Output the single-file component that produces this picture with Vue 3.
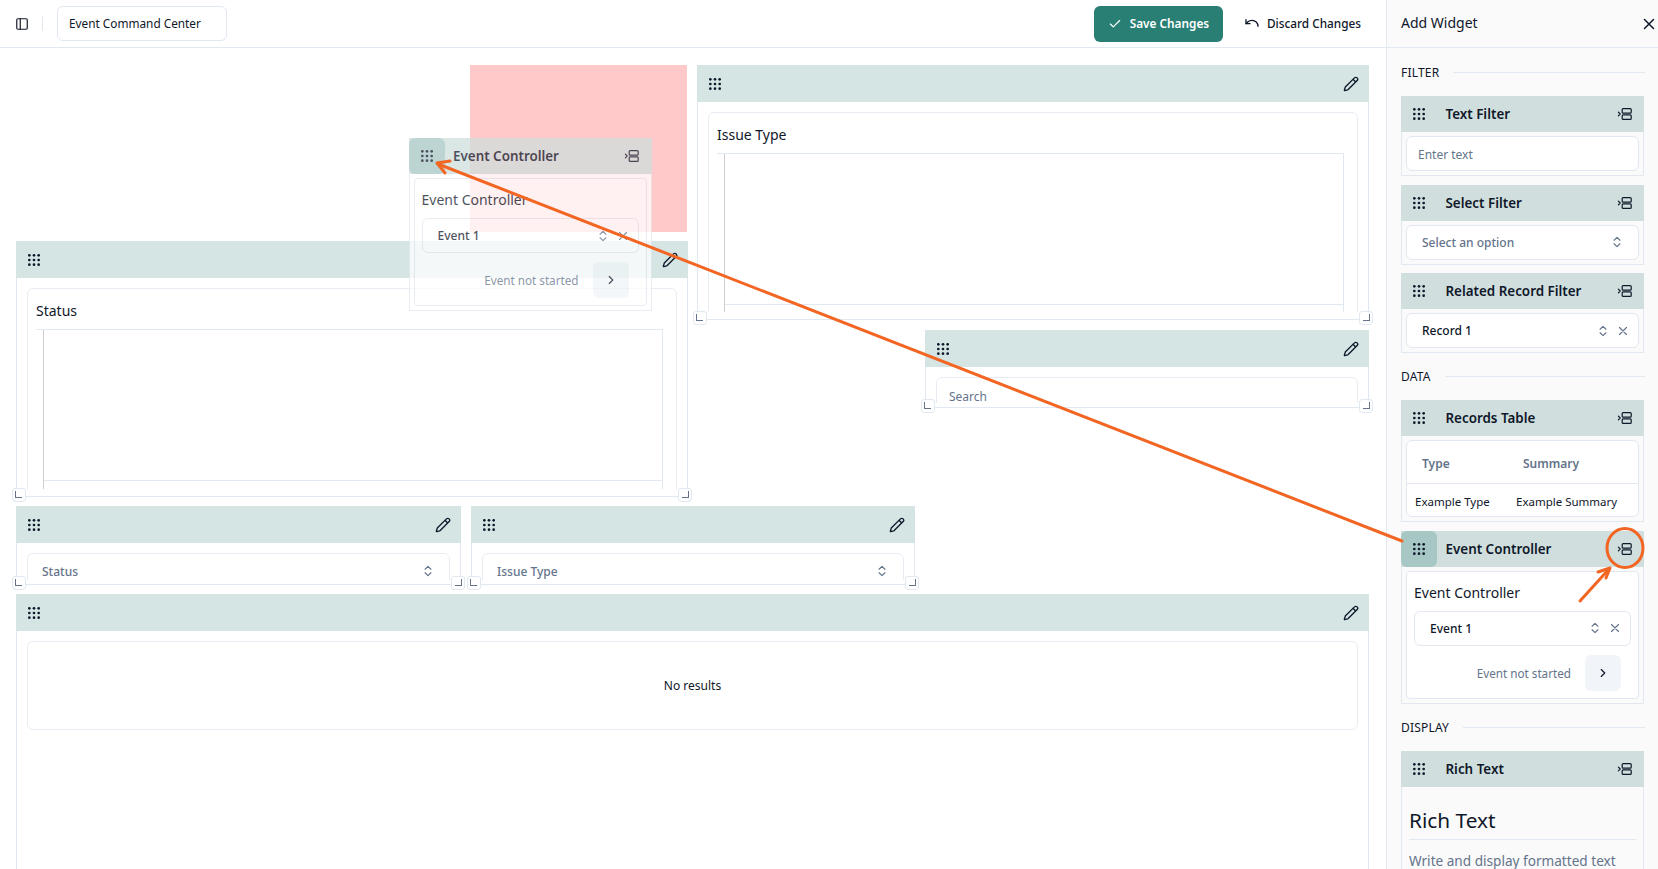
<script setup>
const widgets = [
  { id: 'issue', kind: 'chart', title: 'Issue Type', l: 697, t: 65, w: 672, h: 255, handles: true },
  { id: 'status', kind: 'chart', title: 'Status', l: 16, t: 241, w: 672, h: 256, handles: true },
  { id: 'search', kind: 'input', title: 'Search', l: 925, t: 330, w: 444, h: 78, handles: true },
  { id: 'sel1', kind: 'select', title: 'Status', l: 16, t: 506, w: 445, h: 79, handles: true },
  { id: 'sel2', kind: 'select', title: 'Issue Type', l: 471, t: 506, w: 444, h: 79, handles: true },
  { id: 'table', kind: 'table', title: 'No results', l: 16, t: 594, w: 1353, h: 400, handles: false }
]
const place = (w) => ({ left: w.l + 'px', top: w.t - 48 + 'px', width: w.w + 'px', height: w.h + 'px' })
</script>

<template>
  <div class="app">
    <svg class="defs" width="0" height="0" aria-hidden="true">
      <symbol id="i-grip" viewBox="0 0 24 24">
        <g fill="currentColor">
          <circle cx="5" cy="5" r="2"/><circle cx="12" cy="5" r="2"/><circle cx="19" cy="5" r="2"/>
          <circle cx="5" cy="12" r="2"/><circle cx="12" cy="12" r="2"/><circle cx="19" cy="12" r="2"/>
          <circle cx="5" cy="19" r="2"/><circle cx="12" cy="19" r="2"/><circle cx="19" cy="19" r="2"/>
        </g>
      </symbol>
      <symbol id="i-pencil" viewBox="0 0 24 24">
        <path fill="none" stroke="currentColor" stroke-width="2" stroke-linecap="round" stroke-linejoin="round" d="M21.2 6.8a2.8 2.8 0 0 0-4-4L3.8 16.2a2 2 0 0 0-.5.8l-1.3 4.4a.5.5 0 0 0 .6.6l4.4-1.3a2 2 0 0 0 .8-.5zM15 5l4 4"/>
      </symbol>
      <symbol id="i-add" viewBox="0 0 16 16">
        <g fill="none" stroke="currentColor" stroke-width="1.2" stroke-linecap="round" stroke-linejoin="round">
          <rect x="5.2" y="2.6" width="9" height="4.6" rx="1"/>
          <rect x="5.2" y="8.8" width="9" height="4.6" rx="1"/>
          <path d="m1.4 6.2 1.8 1.8-1.8 1.8"/>
        </g>
      </symbol>
      <symbol id="i-updown" viewBox="0 0 24 24">
        <path fill="none" stroke="currentColor" stroke-width="2" stroke-linecap="round" stroke-linejoin="round" d="m7 15 5 5 5-5M7 9l5-5 5 5"/>
      </symbol>
      <symbol id="i-x" viewBox="0 0 24 24">
        <path fill="none" stroke="currentColor" stroke-width="2" stroke-linecap="round" stroke-linejoin="round" d="M18 6 6 18M6 6l12 12"/>
      </symbol>
      <symbol id="i-right" viewBox="0 0 24 24">
        <path fill="none" stroke="currentColor" stroke-width="2" stroke-linecap="round" stroke-linejoin="round" d="m9 18 6-6-6-6"/>
      </symbol>
    </svg>

    <div class="main">
      <header class="topbar">
        <svg class="panel-icon" viewBox="0 0 24 24" fill="none" stroke="currentColor" stroke-width="2" stroke-linecap="round" stroke-linejoin="round">
          <rect x="3" y="3" width="18" height="18" rx="2"/><path d="M9 3v18"/>
        </svg>
        <span class="vsep"></span>
        <div class="name-input">Event Command Center</div>
        <div class="spacer"></div>
        <button class="btn-save">
          <svg class="btn-ic" viewBox="0 0 24 24" fill="none" stroke="currentColor" stroke-width="2" stroke-linecap="round" stroke-linejoin="round"><path d="M20 6 9 17l-5-5"/></svg>
          <span class="btn-label">Save Changes</span>
        </button>
        <button class="btn-discard">
          <svg class="undo-ic" viewBox="0 0 24 24" fill="none" stroke="currentColor" stroke-width="2" stroke-linecap="round" stroke-linejoin="round"><path d="M3 7v6h6"/><path d="M21 17a9 9 0 0 0-9-9 9 9 0 0 0-6 2.3L3 13"/></svg>
          <span class="btn-label">Discard Changes</span>
        </button>
      </header>

      <main class="canvas">
        <div class="drop-zone"></div>

        <section v-for="w in widgets" :key="w.id" class="widget" :style="place(w)">
          <div class="w-head">
            <span class="grip"><svg class="ic16"><use href="#i-grip"/></svg></span>
            <span class="pencil"><svg class="ic16"><use href="#i-pencil"/></svg></span>
          </div>
          <div class="w-clip" :class="{ short: w.kind === 'input' || w.kind === 'select' }">
            <div v-if="w.kind === 'chart'" class="w-card chart-card">
              <div class="chart-title">{{ w.title }}</div>
              <div class="chart-top">
                <div class="plot"><div class="plot-area"></div></div>
              </div>
            </div>
            <div v-else-if="w.kind === 'input'" class="w-card field"><span class="field-ph">{{ w.title }}</span></div>
            <div v-else-if="w.kind === 'select'" class="w-card field sel">
              <span class="field-val">{{ w.title }}</span>
              <svg class="ic14 muted"><use href="#i-updown"/></svg>
            </div>
            <div v-else class="w-card empty">{{ w.title }}</div>
          </div>
          <template v-if="w.handles">
            <span class="handle hl"></span>
            <span class="handle hr"></span>
          </template>
        </section>
      </main>
    </div>

    <aside class="sidebar">
      <div class="side-head">
        <span class="side-title">Add Widget</span>
        <svg class="side-close"><use href="#i-x"/></svg>
      </div>
      <div class="side-body">
        <div class="sec first"><span>FILTER</span><i></i></div>

        <div class="card">
          <div class="card-head"><span class="card-grip"><svg class="ic16"><use href="#i-grip"/></svg></span><b>Text Filter</b><svg class="ic16 add"><use href="#i-add"/></svg></div>
          <div class="card-body"><div class="ctl ph-text">Enter text</div></div>
        </div>
        <div class="card">
          <div class="card-head"><span class="card-grip"><svg class="ic16"><use href="#i-grip"/></svg></span><b>Select Filter</b><svg class="ic16 add"><use href="#i-add"/></svg></div>
          <div class="card-body"><div class="ctl sel-text"><span>Select an option</span><svg class="ic14 muted"><use href="#i-updown"/></svg></div></div>
        </div>
        <div class="card">
          <div class="card-head"><span class="card-grip"><svg class="ic16"><use href="#i-grip"/></svg></span><b>Related Record Filter</b><svg class="ic16 add"><use href="#i-add"/></svg></div>
          <div class="card-body"><div class="ctl val-text"><span>Record 1</span><svg class="ic14 muted"><use href="#i-updown"/></svg><svg class="ic14 muted x"><use href="#i-x"/></svg></div></div>
        </div>

        <div class="sec mid"><span>DATA</span><i></i></div>

        <div class="card">
          <div class="card-head"><span class="card-grip"><svg class="ic16"><use href="#i-grip"/></svg></span><b>Records Table</b><svg class="ic16 add"><use href="#i-add"/></svg></div>
          <div class="card-body">
            <div class="mini-table">
              <div class="mt-row mt-head"><span>Type</span><span>Summary</span></div>
              <div class="mt-row mt-cells"><span>Example Type</span><span>Example Summary</span></div>
            </div>
          </div>
        </div>

        <div class="card">
          <div class="card-head"><span class="card-grip active"><svg class="ic16"><use href="#i-grip"/></svg></span><b>Event Controller</b><svg class="ic16 add"><use href="#i-add"/></svg></div>
          <div class="card-body">
            <div class="ev">
              <div class="ev-title">Event Controller</div>
              <div class="ev-select"><span>Event 1</span><svg class="ic14 muted"><use href="#i-updown"/></svg><svg class="ic14 muted x"><use href="#i-x"/></svg></div>
              <div class="ev-foot"><span>Event not started</span><span class="ev-btn"><svg class="ic14"><use href="#i-right"/></svg></span></div>
            </div>
          </div>
        </div>

        <div class="sec mid"><span>DISPLAY</span><i></i></div>

        <div class="card rich">
          <div class="card-head"><span class="card-grip"><svg class="ic16"><use href="#i-grip"/></svg></span><b>Rich Text</b><svg class="ic16 add"><use href="#i-add"/></svg></div>
          <div class="rich-body">
            <div class="rich-h">Rich Text</div>
            <div class="rich-p">Write and display formatted text</div>
          </div>
        </div>
      </div>
    </aside>

    <div class="card ghost">
      <div class="card-head"><span class="card-grip active"><svg class="ic16"><use href="#i-grip"/></svg></span><b>Event Controller</b><svg class="ic16 add"><use href="#i-add"/></svg></div>
      <div class="card-body">
        <div class="ev">
          <div class="ev-title">Event Controller</div>
          <div class="ev-select"><span>Event 1</span><svg class="ic14 muted"><use href="#i-updown"/></svg><svg class="ic14 muted x"><use href="#i-x"/></svg></div>
          <div class="ev-foot"><span>Event not started</span><span class="ev-btn"><svg class="ic14"><use href="#i-right"/></svg></span></div>
        </div>
      </div>
    </div>

    <svg class="annot" viewBox="0 0 1658 869" fill="none" stroke="#f26522" stroke-width="3" stroke-linecap="round" stroke-linejoin="round">
      <path d="M1402 541 438 164"/>
      <path d="M445 173 437 163 450 161"/>
      <ellipse cx="1625" cy="548" rx="18" ry="19.5"/>
      <path d="M1580 601 1609 569"/>
      <path d="M1598 572 1610 568 1606 578"/>
    </svg>
  </div>
</template>

<style>
html, body { margin: 0; background: #fff; }
</style>

<style scoped>
.app {
  position: relative;
  display: flex;
  width: 1658px;
  height: 869px;
  overflow: hidden;
  background: #fff;
  color: #0f172a;
  font-family: "Noto Sans", "Open Sans", sans-serif;
  font-size: 13px;
}
.defs { position: absolute; }
.ic16 { width: 16px; height: 16px; display: block; flex: none; }
.ic14 { width: 14px; height: 14px; display: block; flex: none; }
.muted { color: #64748b; }

.main { flex: 1; min-width: 0; display: flex; flex-direction: column; }
.topbar {
  height: 47px;
  flex: none;
  display: flex;
  align-items: center;
  border-bottom: 1px solid #e2e8f0;
  padding: 0 25px 0 15px;
  box-sizing: content-box;
}
.panel-icon { width: 14px; height: 14px; color: #111827; }
.vsep { width: 1px; height: 15px; background: #e2e8f0; margin: 0 14px 0 13px; }
.name-input {
  width: 170px;
  height: 35px;
  box-sizing: border-box;
  border: 1px solid #e2e8f0;
  border-radius: 6px;
  padding: 0 11px;
  line-height: 33px;
  font-size: 11.8px;
}
.spacer { flex: 1; }
.btn-ic { width: 14px; height: 14px; flex: none; }
.undo-ic { width: 16px; height: 16px; flex: none; margin-top: -2px; }
.btn-label { position: relative; top: -1px; }
.btn-save {
  width: 129px;
  height: 36px;
  border: 0;
  border-radius: 6px;
  background: #2a7f75;
  color: #fff;
  font: 600 11.8px "Noto Sans", sans-serif;
  display: flex;
  align-items: center;
  justify-content: center;
  gap: 8px;
  padding: 0;
}
.btn-discard {
  border: 0;
  background: none;
  color: #0f172a;
  font: 500 11.8px "Noto Sans", sans-serif;
  display: flex;
  align-items: center;
  gap: 7px;
  padding: 0;
  margin-left: 21px;
}

.canvas { position: relative; flex: 1; overflow: hidden; }
.drop-zone { position: absolute; left: 470px; top: 17px; width: 217px; height: 167px; background: #ffc9c9; }

.widget {
  position: absolute;
  box-sizing: border-box;
  border: 1px solid #e2e8f0;
  border-top: 0;
  display: flex;
  flex-direction: column;
  background: #fff;
}
.w-head {
  height: 37px;
  flex: none;
  margin: 0 -1px;
  background: #d5e5e3;
  display: flex;
  align-items: center;
  justify-content: space-between;
}
.grip, .pencil { width: 36px; height: 36px; display: flex; align-items: center; justify-content: center; color: #0f172a; }
.w-clip { flex: 1; min-height: 0; margin: 10px 10px 7px; overflow: hidden; }
.w-clip.short { margin-bottom: 4px; }
.w-card { box-sizing: border-box; border: 1px solid #e8ecf2; border-radius: 6px; background: #fff; }
.chart-card { height: 300px; padding: 0 8px; }
.chart-title { font-size: 14px; height: 40px; line-height: 43px; }
.chart-top { border-top: 1px solid #e2e8f0; margin-right: 5px; height: 260px; }
.plot { margin-left: 7px; height: 100%; border-left: 1px solid #cfcfcf; border-right: 1px solid #e2e8f0; }
.plot-area { height: 150px; border-bottom: 1px solid #e2e8f0; }
.field { height: 36px; padding: 0 14px; display: flex; align-items: center; justify-content: space-between; font-size: 12px; color: #64748b; }
.field-ph { margin: 2px 0 0 -2px; }
.field-val { font-weight: 500; }
.empty { height: 89px; display: flex; align-items: center; justify-content: center; font-size: 12px; color: #0f172a; }
.handle {
  position: absolute;
  bottom: -6px;
  width: 14px;
  height: 14px;
  box-sizing: border-box;
  border: 1px solid #e2e8f0;
  border-radius: 3px;
  background: #fff;
}
.handle::after { content: ""; position: absolute; top: 2px; width: 6px; height: 6px; }
.hl { left: -5px; }
.hl::after { left: 2px; border-left: 1px solid #64748b; border-bottom: 1px solid #64748b; }
.hr { right: -5px; }
.hr::after { right: 2px; border-right: 1px solid #64748b; border-bottom: 1px solid #64748b; }

.sidebar { width: 271px; flex: none; border-left: 1px solid #e2e8f0; background: #fafafa; display: flex; flex-direction: column; min-height: 0; }
.side-head {
  height: 47px;
  flex: none;
  box-sizing: content-box;
  border-bottom: 1px solid #e2e8f0;
  padding: 0 0 0 14px;
  display: flex;
  align-items: center;
  justify-content: space-between;
  font-size: 14px;
}
.side-title { position: relative; top: -1px; }
.side-close { width: 18px; height: 18px; color: #0f172a; }
.side-body { padding: 14px 13px 0 14px; flex: 1; overflow: hidden; }
.sec { height: 20px; display: flex; align-items: center; gap: 14px; margin-bottom: 13px; font-size: 12px; letter-spacing: 0.2px; }
.sec i { flex: 1; height: 1px; background: #e2e8f0; }
.sec.first { margin-bottom: 14px; }
.sec.mid { margin-top: 13.5px; margin-bottom: 13.5px; }

.card { box-sizing: border-box; width: 243px; border: 1px solid #e2e8f0; border-top: 0; margin-bottom: 8.5px; }
.card-head {
  height: 36px;
  margin: 0 -1px;
  background: #d0dfdd;
  display: flex;
  align-items: center;
  padding-right: 11.5px;
}
.card-head b { flex: 1; font-size: 13.4px; font-weight: 600; margin-left: 8.5px; }
.card-grip { width: 36px; height: 36px; display: flex; align-items: center; justify-content: center; border-radius: 6px; flex: none; }
.card-grip.active { background: #a6c7c4; }
.card-body { padding: 4px; }
.ctl {
  box-sizing: border-box;
  height: 35px;
  border: 1px solid #e2e8f0;
  border-radius: 6px;
  background: #fff;
  display: flex;
  align-items: center;
  font-size: 12px;
}
.ctl > span { flex: 1; }
.ph-text { padding: 2px 0 0 11px; color: #64748b; }
.sel-text { padding: 0 14px 0 15px; color: #64748b; font-weight: 500; }
.val-text { padding: 0 8px 0 15px; color: #0f172a; font-weight: 500; }
.x { margin-left: 6px; }

.mini-table { border: 1px solid #e2e8f0; border-radius: 6px; background: #fff; font-size: 12px; box-sizing: border-box; height: 77px; }
.mt-row { display: grid; grid-template-columns: 101px 1fr; }
.mt-head { height: 43px; align-items: center; padding: 3px 0 0 15px; color: #64748b; font-weight: 600; border-bottom: 1px solid #e2e8f0; box-sizing: border-box; }
.mt-cells { height: 32px; align-items: center; padding: 1px 0 0 8px; font-size: 11.5px; }

.ev { box-sizing: border-box; height: 128px; border: 1px solid #e2e8f0; border-radius: 4px; background: #fff; padding: 0 7px; }
.ev-title { height: 39px; line-height: 41px; font-size: 14px; }
.ev-select {
  box-sizing: border-box;
  height: 35px;
  border: 1px solid #e2e8f0;
  border-radius: 6px;
  display: flex;
  align-items: center;
  padding: 0 8px 0 15px;
  font-size: 12px;
  font-weight: 500;
}
.ev-select > span { flex: 1; }
.ev-foot { display: flex; justify-content: flex-end; align-items: center; gap: 14px; margin-top: 9px; padding-right: 10px; font-size: 11.7px; color: #64748b; }
.ev-btn { width: 36px; height: 36px; border-radius: 6px; background: #f1f5f9; display: flex; align-items: center; justify-content: center; color: #0f172a; }

.rich { border-bottom: 0; }
.rich-body { padding: 0 7px; }
.rich-h { height: 52px; line-height: 67px; font-size: 20.8px; border-bottom: 1px solid #e2e8f0; }
.rich-p { margin-top: 11px; font-size: 13.6px; color: #64748b; }

.ghost { position: absolute; left: 408.5px; top: 138px; margin: 0; opacity: 0.75; background: #fff; }
.annot { position: absolute; inset: 0; width: 1658px; height: 869px; pointer-events: none; }
</style>
